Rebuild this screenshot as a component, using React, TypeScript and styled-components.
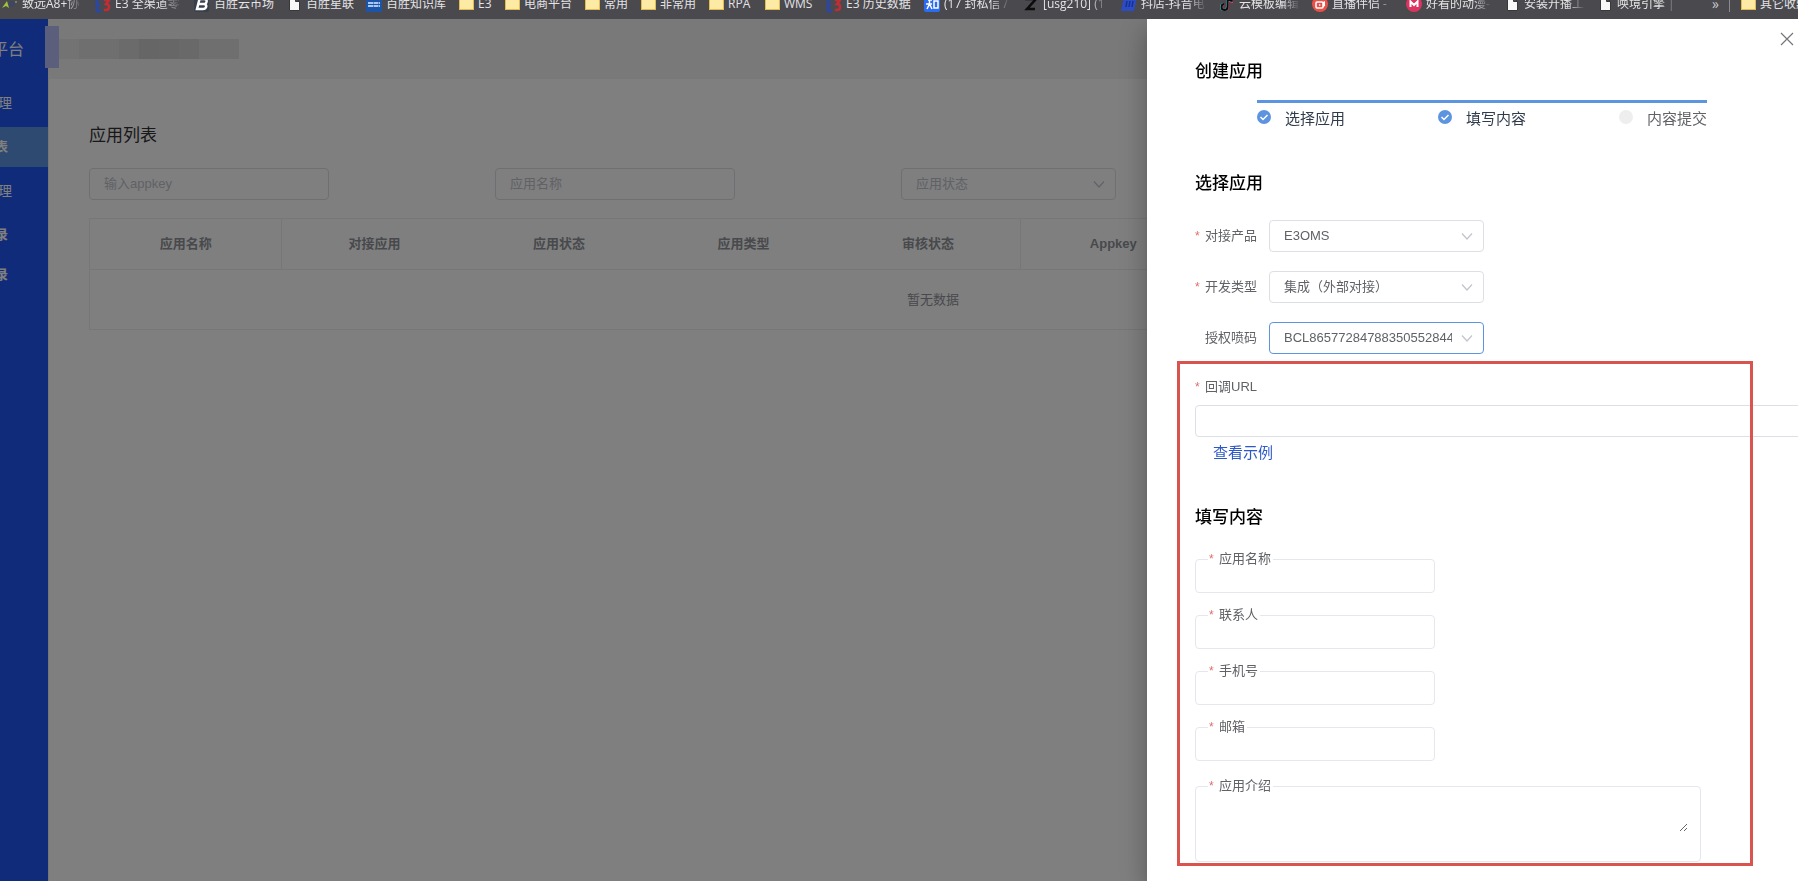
import React from "react";
import styled, { createGlobalStyle, css } from "styled-components";

const GlobalStyle = createGlobalStyle`
  *, *::before, *::after { box-sizing: border-box; }
  body {
    margin: 0;
    overflow: hidden;
    background: #ffffff;
    color: #606266;
    font: 13px/20px "Liberation Sans", "Noto Sans CJK SC", sans-serif;
  }
  input, select, textarea, button { font: inherit; color: inherit; }
`;

/* ---------- bookmarks bar ---------- */

const BookmarkBar = styled.nav`
  position: relative;
  z-index: 5;
  display: flex;
  gap: 12px;
  height: 19px;
  padding-left: 2px;
  overflow: hidden;
  background: #4a494e;
  font-family: "Open Sans", "Noto Sans CJK SC", sans-serif;
  font-size: 12px;
`;

const Bookmark = styled.a`
  display: flex;
  flex: none;
  gap: 4px;
  height: 20px;
  margin-top: -6px;
  align-items: center;
  color: #e4e4e6;
  text-decoration: none;
  white-space: nowrap;
`;

const BookmarkText = styled.span<{ $width: number; $fade?: boolean }>`
  width: ${(p) => p.$width}px;
  overflow: hidden;
  ${(p) =>
    p.$fade &&
    css`
      mask-image: linear-gradient(to right, #000 70%, transparent);
    `}
`;

const BarEnd = styled.div`
  display: flex;
  flex: none;
  gap: 10px;
  margin-left: auto;
`;

const More = styled.button`
  height: 20px;
  margin-top: -6px;
  padding: 0;
  border: 0;
  background: none;
  color: #c8c8cc;
  font-size: 14px;
  line-height: 16px;
`;

const BarDivider = styled.span`
  width: 1px;
  height: 12px;
  background: #8a8a8e;
`;

const Glyph = styled.svg`
  flex: none;
  display: block;
  width: 16px;
  height: 16px;
  margin-top: 2px;
`;

const icons: Record<string, React.ReactNode> = {
  leaf: (
    <>
      <path d="M0 11 L5 4 L7 11 L4 9 Z" fill="#9cc63c" />
      <circle cx="10" cy="7" r="2" fill="none" stroke="#3c4470" strokeWidth="1.5" />
      <circle cx="14" cy="5" r="1" fill="#7c9c5c" />
    </>
  ),
  e3: (
    <>
      <path d="M1 2h5M1 8h4M1 14h5M2 2v12" stroke="#2c489c" strokeWidth="3" fill="none" />
      <path d="M9 3h5l-3 4c4 0 4 6 0 6H9" stroke="#c42c34" strokeWidth="2.5" fill="none" />
    </>
  ),
  b: (
    <>
      <rect width="15" height="15" rx="2" fill="#38404c" />
      <path d="M5 2h5c4 0 3 5 0 5H4M10 7c4 1 2 5-1 5H3L5.500 2" stroke="#fff" strokeWidth="2.500" fill="none" />
    </>
  ),
  page: <path d="M3.500 0.500h6l4 4v9h-10zM9.500 0.500v4h4" fill="#f8f8f8" stroke="#38383c" />,
  wiki: (
    <>
      <rect width="16" height="15" fill="#1c54a8" />
      <path d="M2 6h12M2 9h12" stroke="#a8c8f4" strokeWidth="2" strokeDasharray="5 0.5" />
    </>
  ),
  folder: (
    <>
      <path d="M1 1h6l1 2h8v10H1z" fill="#e4bc50" />
      <rect x="2" y="3" width="13" height="9" fill="#fdeaa4" />
    </>
  ),
  zhihu: (
    <>
      <rect width="16" height="15" rx="2" fill="#2c6cf0" />
      <path d="M4 3h4M2 7h6M5.500 3v4L3 12M6 8l2 4M10 4h4v7h-4z" stroke="#fff" strokeWidth="1.500" fill="none" />
    </>
  ),
  z: <path d="M2 2h11L4 12h8" stroke="#0c0c0c" strokeWidth="2.500" fill="none" />,
  shop: (
    <>
      <path d="M3 0h13l-3 14H0z" fill="#2c4cc4" />
      <path d="M5 10l1-6M8 10l1-6M11 10l1-6" stroke="#18308c" strokeWidth="1.500" />
    </>
  ),
  tiktok: (
    <>
      <path d="M9 0v10a3 3 0 1 1-3-3M9 1c1 3 3 4 5 4" stroke="#e84060" strokeWidth="2" fill="none" />
      <path d="M8 0v10a3 3 0 1 1-3-3M8 0c1 3 3 4 5 4" stroke="#40d8d8" strokeWidth="2" fill="none" />
      <path d="M8.500 0v10a3 3 0 1 1-3-3M8.500 0c1 3 3 4 5 4" stroke="#0c0c10" strokeWidth="2" fill="none" />
    </>
  ),
  live: (
    <>
      <circle cx="8" cy="7" r="8" fill="#e85048" />
      <rect x="4" y="5" width="7" height="6" rx="1" fill="none" stroke="#fff" strokeWidth="1.500" />
      <path d="M7 7l2 1-2 1zM11 5l2-1v5l-2 1" fill="#fff" />
    </>
  ),
  m: (
    <>
      <circle cx="8" cy="7" r="8" fill="#dc3460" />
      <path d="M4.500 10V4.500L8 8l3.500-3.500V10" stroke="#fff" strokeWidth="2" fill="none" />
    </>
  ),
};

const Favicon = ({ name }: { name: string }) => (
  <Glyph viewBox="0 0 16 16" aria-hidden="true">
    {icons[name]}
  </Glyph>
);

const bookmarks: { icon: string; text: string; width: number; fade?: boolean }[] = [
  { icon: "leaf", text: "致远A8+协", width: 61, fade: true },
  { icon: "e3", text: "E3 全渠道零", width: 67, fade: true },
  { icon: "b", text: "百胜云市场", width: 60 },
  { icon: "page", text: "百胜星联", width: 48 },
  { icon: "wiki", text: "百胜知识库", width: 60 },
  { icon: "folder", text: "E3", width: 14 },
  { icon: "folder", text: "电商平台", width: 48 },
  { icon: "folder", text: "常用", width: 24 },
  { icon: "folder", text: "非常用", width: 36 },
  { icon: "folder", text: "RPA", width: 24 },
  { icon: "folder", text: "WMS", width: 30 },
  { icon: "e3", text: "E3 历史数据", width: 66 },
  { icon: "zhihu", text: "(17 封私信 /", width: 67, fade: true },
  { icon: "z", text: "[usg210] (1", width: 66, fade: true },
  { icon: "shop", text: "抖店-抖音电", width: 66, fade: true },
  { icon: "tiktok", text: "云模板编辑", width: 61, fade: true },
  { icon: "live", text: "直播伴侣 -", width: 62, fade: true },
  { icon: "m", text: "好看的动漫-", width: 66, fade: true },
  { icon: "page", text: "安装开播工", width: 61, fade: true },
  { icon: "page", text: "唤境引擎 |", width: 61, fade: true },
];

/* ---------- page below the overlay ---------- */

const Shell = styled.div`
  display: flex;
  min-height: calc(100vh - 19px);
`;

const Sidebar = styled.aside`
  flex: none;
  width: 48px;
  overflow: hidden;
  background: #1e56f2;
  color: #ffffff;
`;

const Brand = styled.div`
  display: flex;
  justify-content: flex-end;
  align-items: center;
  height: 60px;
  padding: 2px 24px 0 0;
  font-size: 16px;
  white-space: nowrap;
`;

const MenuItem = styled.a<{ $active?: boolean; $sub?: boolean }>`
  display: flex;
  justify-content: flex-end;
  align-items: center;
  height: ${(p) => (p.$sub ? 40 : 48)}px;
  padding-right: ${(p) => (p.$sub ? 40 : 36)}px;
  background: ${(p) => (p.$active ? "#5c94e0" : "transparent")};
  color: inherit;
  font-size: ${(p) => (p.$sub ? 13 : 14)}px;
  font-weight: ${(p) => (p.$sub ? 700 : 400)};
  text-decoration: none;
  white-space: nowrap;
`;

const Main = styled.main`
  flex: 1;
  min-width: 0;
  border-left: 1px solid #eeeeee;
`;

const TopBar = styled.header`
  display: flex;
  align-items: center;
  height: 60px;
  background: #f2f2f2;
`;

const CollapseButton = styled.button`
  position: relative;
  width: 14px;
  height: 42px;
  margin: 0 0 4px -4px;
  padding: 0;
  border: 0;
  background: #b8bef8;
`;

const Crumb = styled.span<{ $color: string }>`
  width: 20px;
  height: 20px;
  background: ${(p) => p.$color};
`;

const crumbs = ["#e6e6e6", "#dedede", "#dedede", "#d6d6d6", "#cccccc", "#cecece", "#d2d2d2", "#dedede", "#dedede"];

const Content = styled.div`
  padding: 45px 21px 40px 40px;
`;

const PageTitle = styled.h1`
  margin: 0 0 20px;
  color: #303133;
  font-size: 17px;
  font-weight: 400;
  line-height: 24px;
`;

const Filters = styled.form`
  display: grid;
  grid-template-columns: repeat(4, 1fr);
  margin-bottom: 18px;
  padding-right: 64px;
`;

const TextInput = styled.input`
  display: block;
  width: 240px;
  height: 32px;
  padding: 0 14px 1px;
  border: 1px solid #dcdfe6;
  border-radius: 4px;
  background: #ffffff;
  outline: none;
  &::placeholder { color: #c0c4cc; opacity: 1; }
`;

const SelectBox = styled.div`
  position: relative;
  width: 215px;
`;

const SelectInput = styled.select<{ $focused?: boolean; $empty?: boolean }>`
  display: block;
  width: 100%;
  height: 32px;
  padding: 0 31px 1px 14px;
  border: 1px solid ${(p) => (p.$focused ? "#5c94e0" : "#dcdfe6")};
  border-radius: 4px;
  background: #ffffff;
  color: ${(p) => (p.$empty ? "#c0c4cc" : "#606266")};
  appearance: none;
  outline: none;
`;

const Chevron = styled.svg`
  position: absolute;
  top: 10px;
  right: 11px;
  width: 12px;
  height: 12px;
  pointer-events: none;
`;

type SelectProps = { id: string; value: string; focused?: boolean; empty?: boolean; label?: string };

const Select = ({ id, value, focused, empty, label }: SelectProps) => (
  <SelectBox>
    <SelectInput id={id} $focused={focused} $empty={empty} aria-label={label}>
      <option>{value}</option>
    </SelectInput>
    <Chevron viewBox="0 0 12 12" aria-hidden="true">
      <path d="M1 3.500l5 5.500 5-5.500" fill="none" stroke="#c0c4cc" strokeWidth="1.200" />
    </Chevron>
  </SelectBox>
);

const Table = styled.table`
  width: 100%;
  border: 1px solid #ebeef5;
  border-collapse: collapse;
  table-layout: fixed;
  color: #909399;
  th, td { padding: 0; text-align: center; }
  th { height: 51px; border-bottom: 1px solid #ebeef5; font-weight: 700; }
  th.divided { border-right: 1px solid #ebeef5; }
  td { height: 60px; }
`;

/* ---------- drawer ---------- */

const Mask = styled.div`
  position: fixed;
  inset: 19px 0 0;
  z-index: 2;
  background: rgba(0, 0, 0, 0.5);
`;

const Drawer = styled.section`
  position: fixed;
  inset: 19px 0 0 auto;
  z-index: 3;
  width: 651px;
  max-width: 100%;
  padding: 41px 45px 0 48px;
  overflow: hidden;
  background: #ffffff;
  box-shadow: 0 8px 10px -5px rgba(0, 0, 0, 0.2), 0 16px 24px 2px rgba(0, 0, 0, 0.14),
    0 6px 30px 5px rgba(0, 0, 0, 0.12);
`;

const CloseButton = styled.button`
  position: absolute;
  top: 13px;
  right: 4px;
  width: 14px;
  height: 14px;
  padding: 0;
  border: 0;
  background: none;
  svg { display: block; }
`;

const Heading = styled.h2`
  margin: 0;
  color: #000000;
  font-size: 17px;
  font-weight: 500;
  line-height: 24px;
`;

const Steps = styled.ol`
  display: flex;
  justify-content: space-between;
  width: 450px;
  margin: 16px 0 43px 62px;
  padding: 6px 0 0;
  border-top: 3px solid #5c94e0;
  list-style: none;
`;

const Step = styled.li<{ $pending?: boolean }>`
  display: flex;
  gap: 14px;
  color: ${(p) => (p.$pending ? "#606266" : "#303c4c")};
  font-size: 15px;
  line-height: 20px;
  svg { margin-top: 1px; }
`;

const StepMark = ({ done }: { done?: boolean }) => (
  <svg width="14" height="14" viewBox="0 0 14 14" aria-hidden="true">
    <circle cx="7" cy="7" r="7" fill={done ? "#5c94e0" : "#eeeeee"} />
    {done && <path d="M3.500 7l2.500 2.500 4.500-4.500" fill="none" stroke="#fff" strokeWidth="1.500" />}
  </svg>
);

const FieldRow = styled.div`
  display: flex;
  align-items: center;
  height: 32px;
  margin-bottom: 19px;
`;

const Label = styled.label<{ $required?: boolean }>`
  flex: none;
  width: 74px;
  padding-left: 10px;
  line-height: 20px;
  ${(p) =>
    p.$required &&
    css`
      padding-left: 0;
      &::before {
        content: "*";
        display: inline-block;
        width: 10px;
        color: #e06c6c;
        font-size: 12px;
      }
    `}
`;

const ProductFields = styled.div`
  margin-top: 24px;
`;

const Highlighted = styled.div`
  position: relative;
  padding-top: 4px;
`;

const HighlightFrame = styled.div`
  position: absolute;
  inset: -12px 0 -4px -18px;
  border: 3px solid #d9534f;
  pointer-events: none;
`;

const UrlInput = styled(TextInput)`
  width: calc(100% + 120px);
  margin-top: 8px;
`;

const ExampleLink = styled.a`
  display: block;
  margin: 5px 0 42px 18px;
  color: #2c58c8;
  font-size: 15px;
  line-height: 22px;
  text-decoration: none;
`;

const Outlined = styled.fieldset<{ $large?: boolean }>`
  width: ${(p) => (p.$large ? 506 : 240)}px;
  height: ${(p) => (p.$large ? 86 : 44)}px;
  margin: 0 0 ${(p) => (p.$large ? 0 : 12)}px;
  padding: 0 12px;
  border: 1px solid #e4e7ed;
  border-radius: 4px;
  legend {
    height: 20px;
    padding: 0 2px 0 1px;
  }
  label { width: auto; }
  input, textarea {
    display: block;
    width: 100%;
    padding: 0;
    border: 0;
    background: none;
    outline: none;
  }
  input { height: 20px; }
  textarea { height: 36px; resize: vertical; }
`;

const OutlinedList = styled.div`
  margin-top: 19px;
`;

const LastField = styled.div`
  padding-top: 3px;
`;

const outlinedFields = [
  { id: "name", label: "应用名称" },
  { id: "contact", label: "联系人" },
  { id: "phone", label: "手机号" },
  { id: "email", label: "邮箱" },
];

export default function App() {
  return (
    <>
      <GlobalStyle />
      <BookmarkBar>
        {bookmarks.map((b) => (
          <Bookmark href="#" key={b.text}>
            <Favicon name={b.icon} />
            <BookmarkText $width={b.width} $fade={b.fade}>
              {b.text}
            </BookmarkText>
          </Bookmark>
        ))}
        <BarEnd>
          <More type="button">»</More>
          <BarDivider />
          <Bookmark href="#">
            <Favicon name="folder" />
            <BookmarkText $width={38}>其它收藏</BookmarkText>
          </Bookmark>
        </BarEnd>
      </BookmarkBar>

      <Shell>
        <Sidebar>
          <Brand>平台</Brand>
          <MenuItem href="#">理</MenuItem>
          <MenuItem href="#" $sub $active>
            表
          </MenuItem>
          <MenuItem href="#">理</MenuItem>
          <MenuItem href="#" $sub>
            录
          </MenuItem>
          <MenuItem href="#" $sub>
            录
          </MenuItem>
        </Sidebar>
        <Main>
          <TopBar>
            <CollapseButton type="button" aria-label="收起菜单" />
            {crumbs.map((c, i) => (
              <Crumb key={i} $color={c} />
            ))}
          </TopBar>
          <Content>
            <PageTitle>应用列表</PageTitle>
            <Filters>
              <TextInput placeholder="输入appkey" aria-label="appkey" />
              <TextInput placeholder="应用名称" aria-label="应用名称" />
              <Select id="status" value="应用状态" label="应用状态" empty />
            </Filters>
            <Table>
              <colgroup>
                <col style={{ width: "11.4%" }} />
                <col span={5} style={{ width: "10.95%" }} />
                <col />
              </colgroup>
              <thead>
                <tr>
                  <th className="divided">应用名称</th>
                  <th>对接应用</th>
                  <th>应用状态</th>
                  <th>应用类型</th>
                  <th className="divided">审核状态</th>
                  <th>Appkey</th>
                  <th />
                </tr>
              </thead>
              <tbody>
                <tr>
                  <td colSpan={7}>暂无数据</td>
                </tr>
              </tbody>
            </Table>
          </Content>
        </Main>
      </Shell>

      <Mask />
      <Drawer role="dialog" aria-label="创建应用">
        <CloseButton type="button" aria-label="关闭">
          <svg width="14" height="14" viewBox="0 0 14 14">
            <path d="M1 1l12 12M13 1L1 13" stroke="#72767b" strokeWidth="1.200" />
          </svg>
        </CloseButton>
        <Heading>创建应用</Heading>
        <Steps>
          <Step>
            <StepMark done />
            选择应用
          </Step>
          <Step>
            <StepMark done />
            填写内容
          </Step>
          <Step $pending>
            <StepMark />
            内容提交
          </Step>
        </Steps>

        <Heading>选择应用</Heading>
        <ProductFields>
          <FieldRow>
            <Label htmlFor="product" $required>
              对接产品
            </Label>
            <Select id="product" value="E3OMS" />
          </FieldRow>
          <FieldRow>
            <Label htmlFor="devtype" $required>
              开发类型
            </Label>
            <Select id="devtype" value="集成（外部对接）" />
          </FieldRow>
          <FieldRow>
            <Label htmlFor="code">授权喷码</Label>
            <Select id="code" value="BCL86577284788350552844" focused />
          </FieldRow>
        </ProductFields>

        <Highlighted>
          <Label htmlFor="callback" $required>
            回调URL
          </Label>
          <UrlInput id="callback" />
          <ExampleLink href="#">查看示例</ExampleLink>
          <Heading>填写内容</Heading>
          <OutlinedList>
            {outlinedFields.map((f) => (
              <Outlined key={f.id}>
                <legend>
                  <Label htmlFor={f.id} $required>
                    {f.label}
                  </Label>
                </legend>
                <input id={f.id} />
              </Outlined>
            ))}
            <LastField>
              <Outlined $large>
                <legend>
                  <Label htmlFor="intro" $required>
                    应用介绍
                  </Label>
                </legend>
                <textarea id="intro" />
              </Outlined>
            </LastField>
          </OutlinedList>
          <HighlightFrame />
        </Highlighted>
      </Drawer>
    </>
  );
}
